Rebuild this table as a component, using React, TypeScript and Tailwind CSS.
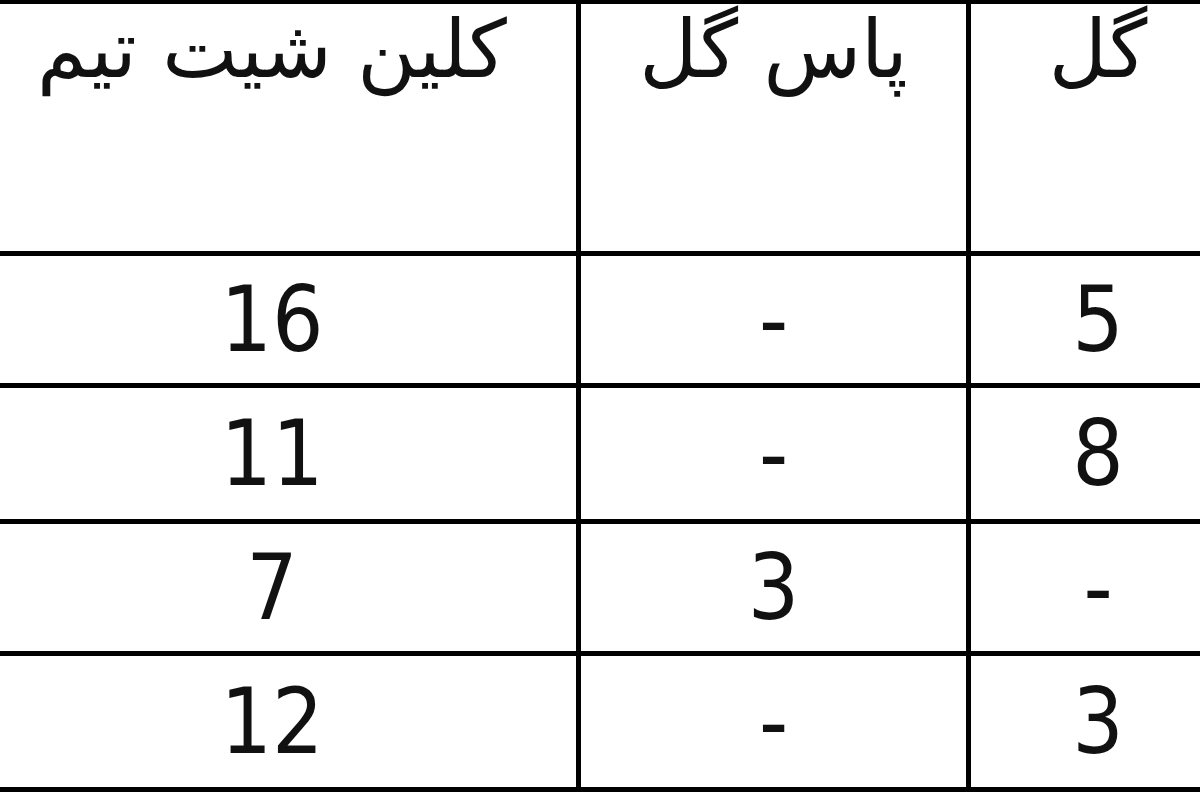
const headers = ['کلین شیت تیم', 'پاس گل', 'گل'];

const rows = [
  ['16', '-', '5'],
  ['11', '-', '8'],
  ['7', '3', '-'],
  ['12', '-', '3'],
];

export default function App() {
  return (
    <div className="w-[1200px] h-[800px] overflow-hidden bg-white">
      <div className="ml-[-32px] w-[1257px] grid grid-cols-[608px_385px_254px] grid-rows-[247px_127px_131px_127px_131px] gap-[5px] bg-black pt-[4px] pb-[5px]">
        {headers.map((h, i) => (
          <div key={i} className="bg-white flex justify-center">
            <span
              dir="rtl"
              lang="fa"
              className="text-[80px] leading-[92px] text-[#111] [font-family:'DejaVu_Sans',sans-serif]"
            >
              {h}
            </span>
          </div>
        ))}
        {rows.map((row, r) =>
          row.map((v, c) => (
            <div key={`${r}-${c}`} className="bg-white flex items-center justify-center">
              <span className="text-[90px] leading-none text-[#111] [font-family:'DejaVu_Sans_Condensed','DejaVu_Sans',sans-serif]">
                {v}
              </span>
            </div>
          ))
        )}
      </div>
    </div>
  );
}
